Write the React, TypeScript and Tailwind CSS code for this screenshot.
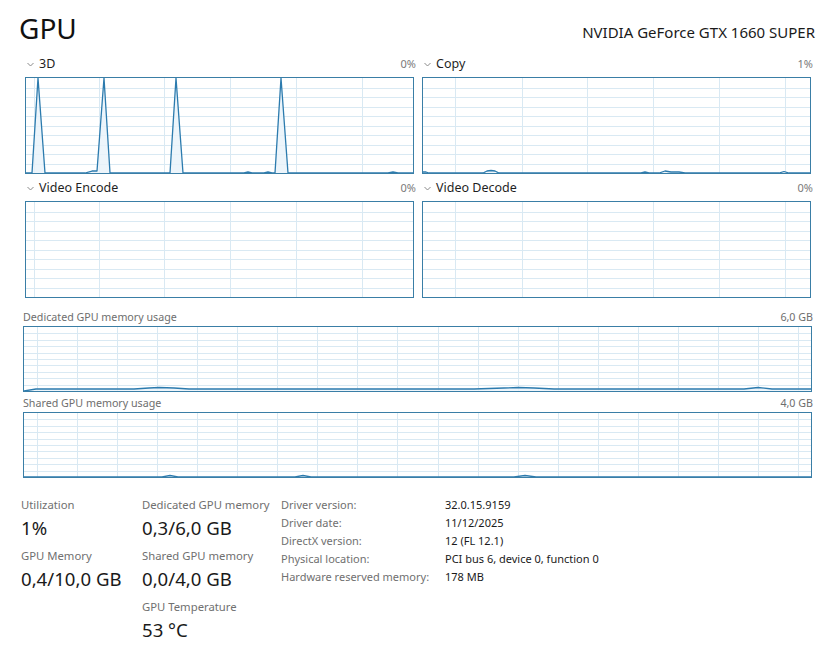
import React from "react";

type ChartProps = {
  w: number; // inner width
  h: number; // inner height
  vLines: number[];
  rows: number;
  path?: string;
};

function Chevron() {
  return (
    <svg width="7" height="5" viewBox="0 0 7 5" className="shrink-0">
      <polyline points="0.5,1 3.5,4 6.5,1" fill="none" stroke="#8a8a8a" strokeWidth="1" />
    </svg>
  );
}

function Chart({ w, h, vLines, rows, path }: ChartProps) {
  const hLines = Array.from({ length: rows - 1 }, (_, i) => ((i + 1) * h) / rows);
  return (
    <div className="border border-[#3a7ea6] bg-white">
      <svg width={w} height={h} viewBox={`0 0 ${w} ${h}`} className="block">
        {hLines.map((y) => (
          <line key={`h${y}`} x1={0} x2={w} y1={Math.round(y) + 0.5} y2={Math.round(y) + 0.5} stroke="#d9e9f3" strokeWidth="1" />
        ))}
        {vLines.map((x) => (
          <line key={`v${x}`} x1={Math.round(x) + 0.5} x2={Math.round(x) + 0.5} y1={0} y2={h} stroke="#d9e9f3" strokeWidth="1" />
        ))}
        {path && (
          <>
            <path d={`${path} L${w},${h} L0,${h} Z`} fill="#e9f3fa" fillOpacity="0.8" />
            <path d={path} fill="none" stroke="#2c7bae" strokeWidth="1.3" strokeLinejoin="round" />
          </>
        )}
      </svg>
    </div>
  );
}

function EngineChart({ title, pct, vLines, path }: { title: string; pct: string; vLines: number[]; path?: string }) {
  return (
    <div className="flex flex-col">
      <div className="flex items-center justify-between h-[20px] mb-[3px]">
        <div className="flex items-center gap-[5px] pl-[2px]">
          <Chevron />
          <span className="text-[12.5px] text-[#1f1f1f]">{title}</span>
        </div>
        <span className="text-[11px] text-[#7a7a7a] -mr-[2px]">{pct}</span>
      </div>
      <Chart w={387} h={95} vLines={vLines} rows={10} path={path} />
    </div>
  );
}

function MemChart({ title, max, path }: { title: string; max: string; path?: string }) {
  const vLines = Array.from({ length: 20 }, (_, i) => 12.5 + i * 40.1);
  return (
    <div className="flex flex-col">
      <div className="flex items-center justify-between h-[16px] mb-[1px]">
        <span className="text-[10.7px] text-[#6e6e6e]">{title}</span>
        <span className="text-[10.7px] text-[#6e6e6e] -mr-[1px]">{max}</span>
      </div>
      <Chart w={787} h={64} vLines={vLines} rows={10} path={path} />
    </div>
  );
}

function Stat({ label, value }: { label: string; value: string }) {
  return (
    <div className="flex flex-col mb-[5px]">
      <span className="text-[11.3px] leading-[18px] text-[#707070]">{label}</span>
      <span className="text-[18.6px] leading-[28px] text-[#1a1a1a]">{value}</span>
    </div>
  );
}

const leftV = [7.5, 73.3, 138.3, 204.3, 270, 336.3];
const rightV = [32.3, 98.7, 163.7, 229.7, 295.7, 361.7];

const path3d =
  "M0,95 L6,95 L12,0 L19,95 L59,95 L66,93 L71,93 L78,0 L84,95 L144,95 L150,0 L157,95 L218,95 L222,94 L226,95 L238,95 L242,94 L246,95 L249,95 L255,0 L262,95 L362,95 L367,94 L372,95 L387,95";
const pathCopy =
  "M0,94 L3,94 L6,95 L60,95 L64,93 L68,92.5 L72,93 L76,95 L218,95 L222,94 L226,95 L236,95 L242,93 L248,94 L256,94 L262,95 L356,95 L361,93.5 L366,95 L387,95";
const pathDed =
  "M0,64 L12,62 L110,62 L125,61 L135,60.5 L150,61 L165,62 L450,62 L480,61 L494,60.5 L510,61 L530,62 L720,62 L734,60.5 L748,62 L787,62";
const pathShared =
  "M0,64 L138,64 L146,62.5 L154,64 L271,64 L279,62.5 L287,64 L490,64 L501,62.5 L512,64 L787,64";

const driver: [string, string][] = [
  ["Driver version:", "32.0.15.9159"],
  ["Driver date:", "11/12/2025"],
  ["DirectX version:", "12 (FL 12.1)"],
  ["Physical location:", "PCI bus 6, device 0, function 0"],
  ["Hardware reserved memory:", "178 MB"],
];

export default function App() {
  return (
    <div className="w-[838px] h-[662px] bg-white overflow-hidden font-['Noto_Sans',sans-serif]">
      {/* Header */}
      <div className="flex items-end justify-between pl-[19px] pr-[23px] pt-[11px]">
        <h1 className="text-[28px] leading-[34px] text-[#111]">GPU</h1>
        <span className="text-[15px] leading-[22px] text-[#1a1a1a] mb-[2px]">NVIDIA GeForce GTX 1660 SUPER</span>
      </div>

      {/* Engine charts */}
      <div className="grid grid-cols-[389px_389px] gap-x-[8px] gap-y-[4px] pl-[25px] mt-[9px]">
        <EngineChart title="3D" pct="0%" vLines={leftV} path={path3d} />
        <EngineChart title="Copy" pct="1%" vLines={rightV} path={pathCopy} />
        <EngineChart title="Video Encode" pct="0%" vLines={leftV} />
        <EngineChart title="Video Decode" pct="0%" vLines={rightV} />
      </div>

      {/* Memory charts */}
      <div className="flex flex-col gap-[3px] pl-[23px] mt-[11px] w-[812px]">
        <MemChart title="Dedicated GPU memory usage" max="6,0 GB" path={pathDed} />
        <MemChart title="Shared GPU memory usage" max="4,0 GB" path={pathShared} />
      </div>

      {/* Stats */}
      <div className="flex pl-[21px] mt-[18px]">
        <div className="w-[121px] flex flex-col">
          <Stat label="Utilization" value="1%" />
          <Stat label="GPU Memory" value="0,4/10,0 GB" />
        </div>
        <div className="w-[139px] flex flex-col">
          <Stat label="Dedicated GPU memory" value="0,3/6,0 GB" />
          <Stat label="Shared GPU memory" value="0,0/4,0 GB" />
          <Stat label="GPU Temperature" value="53 °C" />
        </div>
        <div className="flex flex-col">
          {driver.map(([k, v]) => (
            <div key={k} className="flex text-[11px] leading-[18px]">
              <span className="w-[164px] text-[#707070]">{k}</span>
              <span className="text-[#1a1a1a]">{v}</span>
            </div>
          ))}
        </div>
      </div>
    </div>
  );
}
